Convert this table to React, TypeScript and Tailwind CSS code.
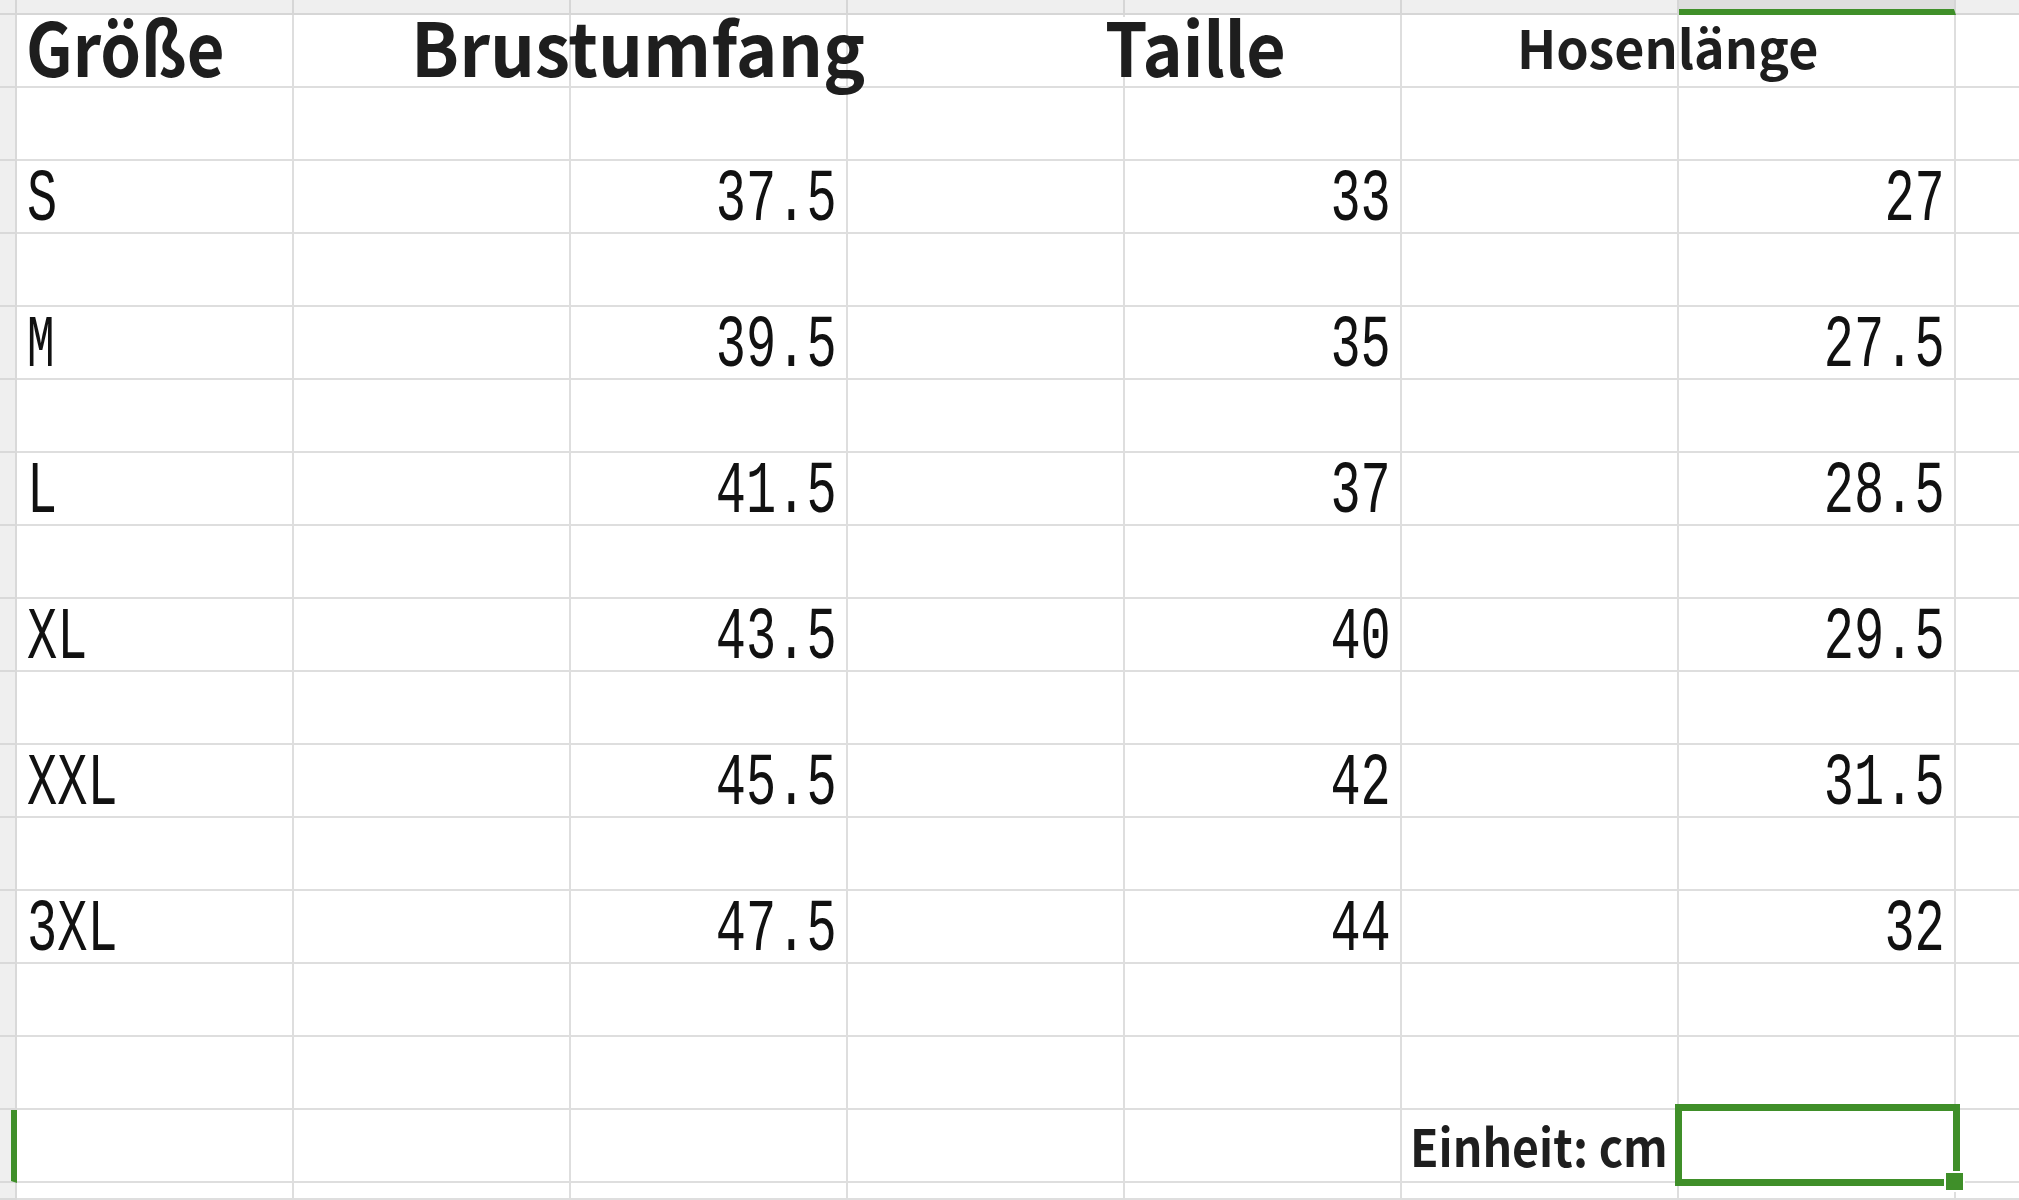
import clsx from 'clsx';

const sizes = [
  { label: 'S', chest: '37.5', waist: '33', length: '27' },
  { label: 'M', chest: '39.5', waist: '35', length: '27.5' },
  { label: 'L', chest: '41.5', waist: '37', length: '28.5' },
  { label: 'XL', chest: '43.5', waist: '40', length: '29.5' },
  { label: 'XXL', chest: '45.5', waist: '42', length: '31.5' },
  { label: '3XL', chest: '47.5', waist: '44', length: '32' },
];

const head =
  "relative z-10 inline-block origin-left whitespace-nowrap font-['Noto_Sans_CJK_SC','Noto_Sans',sans-serif] font-bold text-[#1e1e1e]";
const mono = "font-['Liberation_Mono','DejaVu_Sans_Mono',monospace] text-[74px] text-[#111]";

const Cell = ({
  className,
  children,
}: {
  className?: string;
  children?: React.ReactNode;
}) => (
  <div
    className={clsx(
      'relative flex h-full w-[277px] shrink-0 border-r-2 border-b-2 border-[#dedede]',
      className ?? 'items-center',
    )}
  >
    {children}
  </div>
);

const RowHead = ({ active }: { active?: boolean }) => (
  <div
    className={clsx(
      'h-full w-[17px] shrink-0 border-b-2 bg-[#efefef] border-[#d9d9d9]',
      active ? 'border-r-[6px] border-r-[#3f8f29]' : 'border-r-2',
    )}
  />
);

const Row = ({
  children,
  active,
  className,
}: {
  children?: React.ReactNode;
  active?: boolean;
  className?: string;
}) => (
  <div className={clsx('flex shrink-0', className ?? 'h-[73px]')}>
    <RowHead active={active} />
    {children}
    <div className="h-full flex-1 border-b-2 border-[#dedede]" />
  </div>
);

const EmptyCells = ({ n }: { n: number }) => (
  <>
    {Array.from({ length: n }).map((_, i) => (
      <Cell key={i} />
    ))}
  </>
);

const Num = ({ value }: { value: string }) => (
  <Cell className="items-center justify-end pr-[9px]">
    <span className={clsx('relative z-10 inline-block origin-right scale-x-[0.68] pt-[6px] leading-none', mono)}>
      {value}
    </span>
  </Cell>
);

export default function App() {
  return (
    <div className="flex h-[1200px] w-[2019px] flex-col overflow-hidden bg-white">
      {/* column header strip (cut off) */}
      <div className="flex h-[15px] shrink-0">
        <div className="h-full w-[17px] shrink-0 border-r-2 border-b-2 border-[#d6d6d6] bg-[#eeeeee]" />
        {Array.from({ length: 6 }).map((_, i) => (
          <div
            key={i}
            className="h-full w-[277px] shrink-0 border-r-2 border-b-2 border-[#d6d6d6] bg-[#efefef]"
          />
        ))}
        <div className="h-full w-[277px] shrink-0 border-r-2 border-b-[6px] border-r-[#d6d6d6] border-b-[#3f8f29] bg-[#dedede]" />
        <div className="h-full flex-1 border-b-2 border-[#d6d6d6] bg-[#efefef]" />
      </div>

      {/* header row */}
      <Row>
        <Cell className="items-start pl-[9px] pt-[2px]">
          <span className={clsx('scale-x-[0.88] text-[74px] leading-[56px]', head)}>Größe</span>
        </Cell>
        <Cell className="items-start pl-[117px] pt-[2px]">
          <span className={clsx('scale-x-[0.955] text-[74px] leading-[56px]', head)}>Brustumfang</span>
        </Cell>
        <Cell />
        <Cell className="items-start pl-[257px] pt-[2px]">
          <span className={clsx('scale-x-[0.92] bg-white text-[74px] leading-[56px]', head)}>Taille</span>
        </Cell>
        <Cell />
        <Cell className="items-start pl-[115px] pt-[6px]">
          <span className={clsx('scale-x-[0.98] text-[53px] leading-[50px]', head)}>Hosenlänge</span>
        </Cell>
        <Cell />
      </Row>

      {sizes.map((s) => (
        <div key={s.label} className="contents">
          <Row>
            <EmptyCells n={7} />
          </Row>
          <Row>
            <Cell className="items-center pl-[10px]">
              <span
                className={clsx(
                  'relative z-10 inline-block origin-left pt-[6px] leading-none',
                  s.label === 'M' ? 'scale-x-[0.62]' : 'scale-x-[0.68]',
                  mono,
                )}
              >
                {s.label}
              </span>
            </Cell>
            <Cell />
            <Num value={s.chest} />
            <Cell />
            <Num value={s.waist} />
            <Cell />
            <Num value={s.length} />
          </Row>
        </div>
      ))}

      <Row>
        <EmptyCells n={7} />
      </Row>
      <Row>
        <EmptyCells n={7} />
      </Row>

      {/* unit row with selected cell */}
      <Row active>
        <EmptyCells n={5} />
        <Cell className="items-center pl-[8px]">
          <span className={clsx('scale-x-[0.91] text-[51px] leading-[1.2]', head)}>Einheit: cm</span>
        </Cell>
        <Cell>
          <div className="absolute -top-[6px] -left-[4px] -right-[6px] -bottom-[5px] z-20 border-[7px] border-[#3f8f29]" />
          <div className="absolute -right-[11px] -bottom-[11px] z-30 h-[21px] w-[21px] border-2 border-white bg-[#3f8f29]" />
        </Cell>
      </Row>

      <Row className="flex-1">
        <EmptyCells n={7} />
      </Row>
    </div>
  );
}
